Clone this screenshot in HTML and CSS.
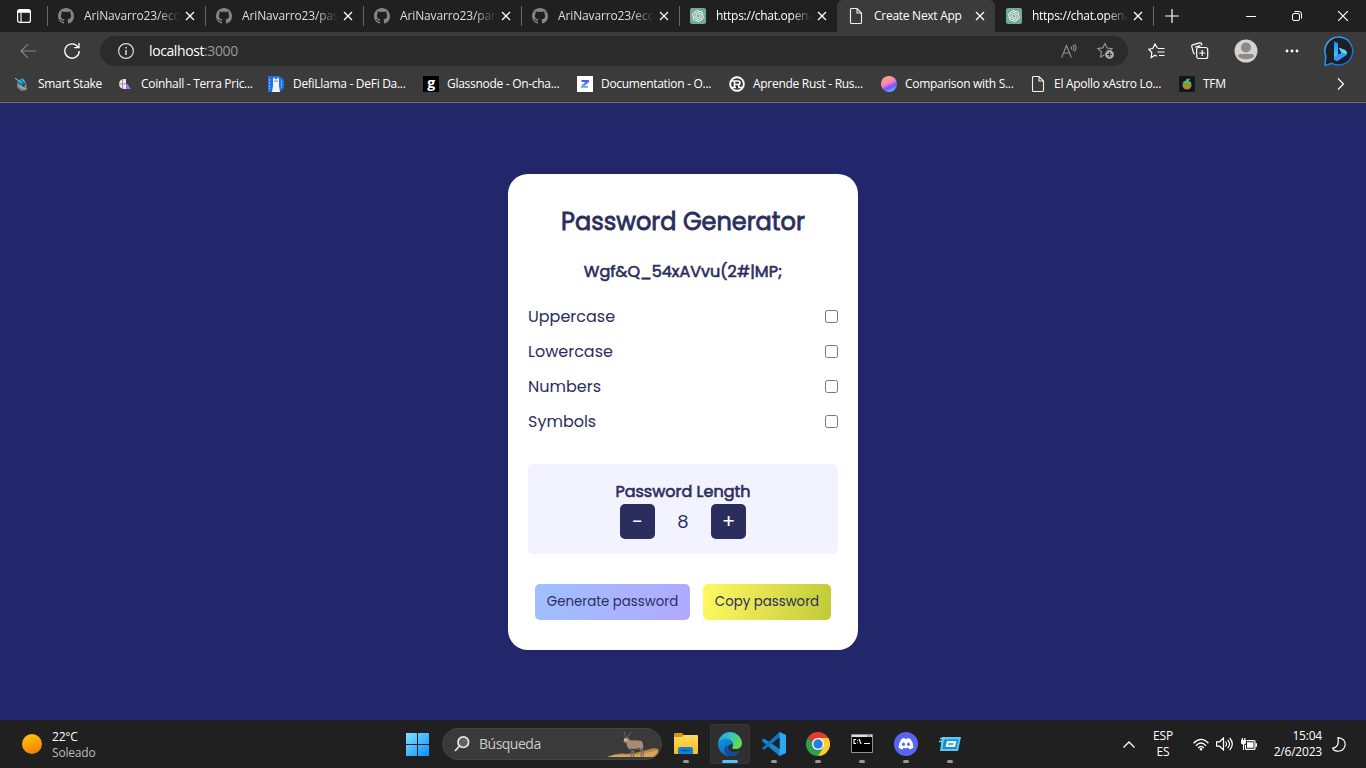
FILE: index.html
```html
<!DOCTYPE html>
<html lang="es">
<head>
<meta charset="utf-8">
<title>Create Next App</title>
<link rel="stylesheet" href="styles.css">
</head>
<body>
<svg class="defs" width="0" height="0">
  <defs>
    <symbol id="github" viewBox="0 0 16 16"><path fill="#858585" d="M8 0C3.58 0 0 3.58 0 8c0 3.54 2.29 6.53 5.47 7.59.4.07.55-.17.55-.38 0-.19-.01-.82-.01-1.49-2.01.37-2.53-.49-2.69-.94-.09-.23-.48-.94-.82-1.13-.28-.15-.68-.52-.01-.53.63-.01 1.08.58 1.23.82.72 1.21 1.87.87 2.33.66.07-.52.28-.87.51-1.07-1.78-.2-3.64-.89-3.64-3.95 0-.87.31-1.59.82-2.15-.08-.2-.36-1.02.08-2.12 0 0 .67-.21 2.2.82.64-.18 1.32-.27 2-.27s1.36.09 2 .27c1.53-1.04 2.2-.82 2.2-.82.44 1.1.16 1.92.08 2.12.51.56.82 1.27.82 2.15 0 3.07-1.87 3.75-3.65 3.95.29.25.54.73.54 1.48 0 1.07-.01 1.93-.01 2.2 0 .21.15.46.55.38A8.01 8.01 0 0 0 16 8c0-4.42-3.58-8-8-8z"/></symbol>
    <symbol id="close" viewBox="0 0 10 10"><path d="M1 1l8 8M9 1L1 9" stroke="#fff" stroke-width="1.3"/></symbol>
    <symbol id="openai" viewBox="0 0 16 16"><rect width="16" height="16" rx="2" fill="#74a99b"/><g transform="translate(2.2 2.2) scale(.483)"><path fill="#fff" d="M22.280 9.820a5.980 5.980 0 0 0-.52-4.910 6.050 6.050 0 0 0-6.510-2.900A6.070 6.070 0 0 0 4.980 4.180a5.980 5.980 0 0 0-4 2.900 6.050 6.050 0 0 0 .74 7.100 5.980 5.980 0 0 0 .51 4.910 6.050 6.050 0 0 0 6.510 2.900A5.980 5.980 0 0 0 13.260 24a6.060 6.060 0 0 0 5.770-4.210 5.990 5.990 0 0 0 4-2.900 6.060 6.060 0 0 0-.75-7.070zM13.260 22.430a4.480 4.480 0 0 1-2.880-1.040l4.920-2.840a.8.8 0 0 0 .39-.68v-6.740l2.020 1.170v5.620a4.500 4.500 0 0 1-4.450 4.510zM3.600 18.300a4.470 4.470 0 0 1-.53-3.010l4.920 2.840a.77.77 0 0 0 .78 0l5.840-3.370v2.330L9.740 19.950A4.500 4.500 0 0 1 3.600 18.300zM2.340 7.900a4.480 4.480 0 0 1 2.370-1.970v5.680a.77.77 0 0 0 .39.68l5.810 3.350-2.020 1.170-4.830-2.790A4.500 4.500 0 0 1 2.340 7.900zM18.940 11.750L13.100 8.360l2.020-1.160 4.830 2.790a4.490 4.490 0 0 1-.68 8.100v-5.680a.79.79 0 0 0-.33-.66zM20.950 8.720L16.200 5.940a.78.78 0 0 0-.79 0L9.570 9.310V6.980l4.860-2.870a4.500 4.500 0 0 1 6.520 4.610zM8.310 12.860l-2.020-1.160V6.070a4.500 4.500 0 0 1 7.380-3.450L8.900 5.460a.8.800 0 0 0-.39.68zM9.400 10.500l2.600-1.500 2.610 1.500v3L12 15l-2.610-1.500z" fill-rule="evenodd"/></g></symbol>
    <symbol id="page" viewBox="0 0 16 16"><path d="M2.5 1.5Q2.5.5 3.5.5H9L13.5 5v9.500q0 1-1 1h-9q-1 0-1-1zM9 .5V5h4.500" fill="none" stroke="#f0f0f0" stroke-width="1.1"/></symbol>
  </defs>
</svg>
<div class="screen">
  <header class="tabs">
    <div class="workspace"><svg width="14" height="14" viewBox="0 0 14 14"><rect x=".6" y=".6" width="12.800" height="12.800" rx="2" fill="none" stroke="#fff" stroke-width="1.200"/><path d="M4 4v9" stroke="#fff" stroke-width="1.100"/><path d="M1 1h12v2.800H1z" fill="#fff"/></svg></div>
    <div class="tab"><svg class="fav"><use href="#github"/></svg><span class="tab-name repo fade">AriNavarro23/eco</span><svg class="x"><use href="#close"/></svg></div>
    <div class="tab"><svg class="fav"><use href="#github"/></svg><span class="tab-name repo fade">AriNavarro23/pas</span><svg class="x"><use href="#close"/></svg></div>
    <div class="tab"><svg class="fav"><use href="#github"/></svg><span class="tab-name repo fade">AriNavarro23/par</span><svg class="x"><use href="#close"/></svg></div>
    <div class="tab"><svg class="fav"><use href="#github"/></svg><span class="tab-name repo fade">AriNavarro23/eco</span><svg class="x"><use href="#close"/></svg></div>
    <div class="tab"><svg class="fav"><use href="#openai"/></svg><span class="tab-name fade">https://chat.opena</span><svg class="x"><use href="#close"/></svg></div>
    <div class="tab active"><svg class="fav"><use href="#page"/></svg><span class="tab-name">Create Next App</span><svg class="x"><use href="#close"/></svg></div>
    <div class="tab last"><svg class="fav"><use href="#openai"/></svg><span class="tab-name fade">https://chat.opena</span><svg class="x"><use href="#close"/></svg></div>
    <div class="new-tab"><svg width="14" height="14"><path d="M7 0v14M0 7h14" stroke="#fff" stroke-width="1.200"/></svg></div>
    <div class="window-buttons">
      <svg width="10" height="10"><path d="M0 5.500h10" stroke="#fff"/></svg>
      <svg width="10" height="10" viewBox="0 0 10 10" fill="none" stroke="#fff"><rect x=".5" y="2.500" width="7" height="7" rx="1.500"/><path d="M2.500.5H7Q9.500.5 9.500 3v4.500"/></svg>
      <svg width="10" height="10"><path d="M0 0l10 10M10 0L0 10" stroke="#fff" stroke-width="1.200"/></svg>
    </div>
  </header>

  <div class="toolbar">
    <svg class="back" width="16" height="14" viewBox="0 0 16 14" fill="none" stroke="#858585" stroke-width="1.100"><path d="M16 7H1M8 0L1 7l7 7"/></svg>
    <svg class="reload" width="16" height="16" viewBox="0 0 16 16" fill="none" stroke="#fff" stroke-width="1.300"><path d="M14.300 4.500A7.200 7.200 0 1 0 15.200 8M15 0v4.700h-4.700"/></svg>
    <div class="address">
      <svg width="16" height="16" viewBox="0 0 16 16" fill="none" stroke="#d8d8d8" stroke-width="1.200"><circle cx="8" cy="8" r="7.400"/><path d="M8 7v5M8 4v1.500" stroke-width="1.500"/></svg>
      <span class="host">localhost<span class="port">:3000</span></span>
      <svg class="read" width="16" height="14" viewBox="0 0 16 14" fill="none" stroke="#929292" stroke-width="1.100"><path d="M.7 13.500L5.500 1.500l4.800 12M2.500 9h6M10 2.500q1.200 1.300 0 3M11.700 1.200q2.400 2.600 0 5.300M13.400 0q3.400 4 0 7.500"/></svg>
      <svg width="18" height="18" viewBox="0 0 18 18"><path d="M8 1.500l2.100 4.600 5 .6-3.700 3.500 1 4.600L8 12.500l-4.400 2.400.9-5L.8 6.500l5-.6z" fill="none" stroke="#999" stroke-width="1.100"/><circle cx="12.500" cy="12.500" r="5" fill="#2b2b2b"/><circle cx="12.500" cy="12.500" r="4.400" fill="#aaa"/><path d="M12.500 10v5M10 12.500h5" stroke="#2b2b2b" stroke-width="1.200"/></svg>
    </div>
    <svg class="favorites" width="17" height="16" viewBox="0 0 17 16" fill="none" stroke="#fff" stroke-width="1.200"><path d="M9.500 5.200L7 1 4.800 5.500l-4 .7 3 3.300-.6 5L7 12.200l2 1M10 5.500h6.500M9.500 9h7M11 12.500h5.500"/></svg>
    <svg class="collections" width="18" height="18" viewBox="0 0 18 18" fill="none" stroke="#fff" stroke-width="1.200"><path d="M4 12q-1.200-.2-1.600-1.400L.8 4.700Q.4 3.300 1.800 2.900L8.500.9q1.500-.4 2 .9l.5 1.400M4.200 5.200L9.500 3.700"/><rect x="5.700" y="5.500" width="11" height="11" rx="2"/><path d="M11.200 8v6M8.200 11h6"/></svg>
    <svg class="avatar" width="24" height="24" viewBox="0 0 24 24"><circle cx="12" cy="12" r="11.500" fill="#d5d2d0"/><circle cx="12" cy="8.500" r="5" fill="#8d8987"/><path d="M4 17.500q0-2.500 2.500-2.500h11q2.500 0 2.500 2.500a10 7 0 0 1-16 0z" fill="#8d8987"/></svg>
    <svg class="more" width="14" height="4"><g fill="#fff"><circle cx="2" cy="2" r="1.400"/><circle cx="7" cy="2" r="1.400"/><circle cx="12" cy="2" r="1.400"/></g></svg>
    <svg class="bing" width="30" height="31" viewBox="0 0 30 31"><defs><linearGradient id="bg" x1="0" y1="0" x2="1" y2="1"><stop stop-color="#35b8f0"/><stop offset="1" stop-color="#1658dc"/></linearGradient><linearGradient id="bb" x2="0" y2="1"><stop stop-color="#1490f5"/><stop offset="1" stop-color="#4cdafa"/></linearGradient></defs><path d="M15 1a14 14 0 1 1-7 26.300L1 29.500 1.800 20A14 14 0 0 1 15 1z" fill="#1d1f24" stroke="url(#bg)" stroke-width="1.500"/><path d="M10 5.500l4 1.500v14.500L10 24z" fill="url(#bb)"/><path d="M10 20.500l7.500-3.500-2.800-5L21 14q3 2 1.500 5L14 24.700q-3.500 1.200-4-4.200z" fill="#2b9efb"/><path d="M14.700 11.500L21 14q2.300 1.500 2 4l-5.500-1.500z" fill="#54dcff"/></svg>
  </div>

  <nav class="bookmarks">
    <div class="bm b1"><svg class="fav" viewBox="0 0 16 16"><path d="M4 4l5-2 3 5-5 3z" fill="#1a78b4"/><path d="M3 6l7 5 2-5 1 8-6 1-4-4z" fill="#7b8788"/><path d="M1 2l5 4M5 10l6 3M8 3l3 3" stroke="#aac2c9"/><path d="M4 5l4 1" stroke="#20baff" stroke-width="2"/></svg><span>Smart Stake</span></div>
    <div class="bm b2"><svg class="fav" viewBox="0 0 16 16"><path d="M2 8a5 5 0 0 1 5-5h2v10H7a5 5 0 0 1-5-5z" fill="#eee4f5"/><path d="M9 8h1.500l3.500 5H9z" fill="#a36fe5"/><path d="M2 8h7M5.500 3v10" stroke="#777" stroke-width=".7"/></svg><span>Coinhall - Terra Pric...</span></div>
    <div class="bm b3"><svg class="fav" viewBox="0 0 16 16"><path d="M0 0h9a7.500 8 0 0 1 0 16H0z" fill="#2172e5"/><path d="M4 16l1-6V3l1-2 1 2h2l1-2 1 2v7l1 6z" fill="#eef6ff"/><path d="M1.500 3v10M13.500 4.500v7" stroke="#8dc6ff" stroke-dasharray="2 1"/><circle cx="7" cy="5" r=".6"/><circle cx="9" cy="5" r=".6"/></svg><span>DefiLlama - DeFi Da...</span></div>
    <div class="bm b4"><span class="fav glass">g</span><span>Glassnode - On-cha...</span></div>
    <div class="bm b5"><svg class="fav" viewBox="0 0 16 16"><defs><linearGradient id="zg" x2="0" y2="1"><stop stop-color="#5548e8"/><stop offset="1" stop-color="#65cefa"/></linearGradient></defs><path fill="#fff" d="M0 0h16v16H0z"/><path d="M4.500 4H12v2l-4.200 4H11v2H4v-2l4-4H4.500z" fill="url(#zg)"/></svg><span>Documentation - O...</span></div>
    <div class="bm b6"><svg class="fav" viewBox="0 0 16 16"><circle cx="8" cy="8" r="6.700" fill="#333" stroke="#fff" stroke-width="1.700"/><circle cx="8" cy="8" r="7.500" fill="none" stroke="#fff" stroke-dasharray="1 .8"/><path d="M2 5h7q2 0 2 1.700T9 8.500H5M5.500 5v6.500M2 11.500h5M8.500 8.500q1.500 0 1.500 3h4" fill="none" stroke="#fff" stroke-width="1.700"/></svg><span>Aprende Rust - Rus...</span></div>
    <div class="bm b7"><span class="fav ball"></span><span>Comparison with S...</span></div>
    <div class="bm b8"><svg class="fav"><use href="#page"/></svg><span>El Apollo xAstro Lo...</span></div>
    <div class="bm b9"><svg class="fav" viewBox="0 0 16 16"><rect width="16" height="16" rx="2" fill="#161423"/><ellipse cx="8" cy="9.500" rx="4.500" ry="4" fill="#a18c34"/><path d="M3.500 8q.5-3 3-3l1-2 4-.5-2 2.500q3 .5 3 3l-3-1-1 1-2-1z" fill="#46c36a"/></svg><span>TFM</span></div>
    <svg class="overflow" width="8" height="12" fill="none" stroke="#fff" stroke-width="1.200"><path d="M1 .5L6.500 6 1 11.500"/></svg>
  </nav>

  <main class="page">
    <section class="card">
      <h1>Password Generator</h1>
      <p class="password">Wgf&amp;Q_54xAVvu(2#|MP;</p>
      <div class="options">
        <label class="option"><span>Uppercase</span><input type="checkbox"></label>
        <label class="option"><span>Lowercase</span><input type="checkbox"></label>
        <label class="option"><span>Numbers</span><input type="checkbox"></label>
        <label class="option"><span>Symbols</span><input type="checkbox"></label>
      </div>
      <div class="length">
        <h2>Password Length</h2>
        <div class="stepper"><button class="step">-</button><span class="count">8</span><button class="step">+</button></div>
      </div>
      <div class="actions"><button class="action generate">Generate password</button><button class="action copy">Copy password</button></div>
    </section>
  </main>

  <footer class="taskbar">
    <div class="weather"><span class="sun"></span><div><div>22°C</div><div class="dim">Soleado</div></div></div>
    <div class="apps">
      <svg class="start" width="24" height="24" viewBox="0 0 24 24"><defs><linearGradient id="wg" gradientUnits="userSpaceOnUse" x1="0" y1="0" x2="24" y2="24"><stop stop-color="#86e1ff"/><stop offset="1" stop-color="#078ffd"/></linearGradient></defs><path fill="url(#wg)" d="M0 1h11v11H0zM12 1h11v11H12zM0 13h11v11H0zM12 13h11v11H12z"/></svg>
      <div class="search">
        <svg width="16" height="16" viewBox="0 0 16 16" fill="none" stroke="#e8e8e8" stroke-width="1.700"><circle cx="9.300" cy="6.200" r="5.300" fill="#626262"/><path d="M5.500 10L1 15"/></svg><span>Búsqueda</span>
        <svg class="oryx" width="52" height="29" viewBox="0 0 52 29"><path d="M0 27q8-4 16-3.500 9 1 20-2.500l9-2.500q6-1 6.500 2 0 4-5 6.500z" fill="#b9873e"/><path d="M0 27q10-3 18-2 12 1 33-5-1 4-5 7z" fill="#d5a65a"/><path d="M18.500 8L17 1M20 7.500L24.500 1.500" stroke="#6b6266" stroke-width="1" fill="none"/><path d="M16.500 11l1-3 3-.5 3 3q6-.5 11 .5 2.500 1.500 2 7l-3 1.500q-6 0-8-.5l-3 1-2.500-4-1-4-2 1z" fill="#a88b77"/><path d="M24 18.500l1 3-1 5.500M26.500 19v8M33 18.500l1.500 3-.5 5.500M35 17.500l1.200 4v5" stroke="#7c6c70" stroke-width="1.300" fill="none"/><path d="M23 19.500q6 0 10-.8" stroke="#3d3536" fill="none"/><path d="M36 12l1.800 7" stroke="#3d3536" stroke-width="1.200"/><path d="M17 9.500l3 1" stroke="#eee"/></svg>
      </div>
      <div class="app"><svg width="24" height="24" viewBox="0 0 24 24"><defs><linearGradient id="fg" x2="0" y2="1"><stop stop-color="#ffdc5c"/><stop offset="1" stop-color="#fdbb22"/></linearGradient></defs><path d="M0 2q0-1 1-1h7l2 2h9v4H0z" fill="#d99608"/><path d="M0 5h8l2-2h13q1 0 1 1v17q0 1-1 1H1q-1 0-1-1z" fill="url(#fg)"/><path d="M4 22v-5q0-2 2-2h11q2 0 2 2v5z" fill="#1681cf"/><path d="M7 18.500h9" stroke="#0759a0" stroke-width="1.500"/></svg></div>
      <div class="app current"><svg width="24" height="24" viewBox="0 0 24 24"><defs><linearGradient id="eg" x1="0" y1="0" x2="1" y2=".4"><stop stop-color="#249cdc"/><stop offset=".5" stop-color="#34c1ca"/><stop offset="1" stop-color="#65dc4a"/></linearGradient><linearGradient id="eb" x1="0" y1="0" x2=".8" y2="1"><stop stop-color="#1598e3"/><stop offset="1" stop-color="#075ab2"/></linearGradient></defs><path d="M.1 11A12 12 0 0 1 24 11c0 4-3 6-6.500 6-3 0-4-1-3-2 2-4-1-7-5-7-4 0-8 1-9.400 3z" fill="url(#eg)"/><path d="M0 12c0-3 4-5.500 8-5.500 4 0 7 3 7 6-3-1-5 1-5 3.500 0 4 7 6 12 3A12 12 0 0 1 0 12z" fill="url(#eb)"/><path d="M10 13c-3 5 3 9 12 6q-3 5-9.500 5C6 24 4 15 10 13z" fill="#124b99"/></svg></div>
      <div class="app"><svg width="24" height="24" viewBox="0 0 24 24"><path d="M0 8l2-1.500L23 20l-5.500 4L0 9z" fill="#1685d0"/><path d="M0 16l17.500-16 4 2L2 18z" fill="#0f74c0"/><path d="M17.500 0L24 3v18l-6.500 3z" fill="#2ba9f2"/><path d="M17.500 7v10L11 12z" fill="#222"/></svg></div>
      <div class="app"><svg width="24" height="24" viewBox="0 0 24 24"><path d="M12 12L1.600 6A12 12 0 0 1 22.400 6z" fill="#e53a2e"/><path d="M12 12L1.600 6A12 12 0 0 0 12 24l5.200-9z" fill="#2ca04c"/><path d="M12 12l5.200 3L12 24A12 12 0 0 0 22.400 6H12z" fill="#fccc30"/><circle cx="12" cy="12" r="6" fill="#fff"/><circle cx="12" cy="12" r="4.700" fill="#287ae8"/></svg></div>
      <div class="app"><svg width="24" height="24" viewBox="0 0 24 24"><path d="M1.500 2.500h21v18h-21z" fill="#000" stroke="#929292"/><path d="M2 3h20v2H2z" fill="#ddd"/><path d="M18 3v2M20 3v2" stroke="#777"/><path d="M6 7.500H4v4h2M7.500 8v.8M7.500 10.500v.8M9 7l2 5M14 11.500h6" stroke="#fff" stroke-width="1.200" fill="none"/></svg></div>
      <div class="app"><svg width="24" height="24" viewBox="0 0 24 24"><circle cx="12" cy="12" r="12" fill="#5865f2"/><path d="M7.500 7q2-1 3-1l.5 1h2l.5-1q1 0 3 1 3 4 3 8.500-2 1.700-4 2l-1-1.700q-2.500.7-5 0l-1 1.700q-2-.3-4-2Q4.500 11 7.500 7z" fill="#fff"/><ellipse cx="9.500" cy="12.300" rx="1.500" ry="1.700" fill="#5865f2"/><ellipse cx="14.500" cy="12.300" rx="1.500" ry="1.700" fill="#5865f2"/></svg></div>
      <div class="app"><svg width="24" height="24" viewBox="0 0 24 24"><path d="M4 5h19l-3 14H2z" fill="#59c8f4"/><path d="M6 7.500h14.500l-2 9.500H4.500z" fill="#208cc5"/><path d="M9 9h9.500L17 15H7.500z" fill="#e9fbff"/><path d="M10.500 11h5l-.5 2h-5z" fill="#38b4e7"/><path d="M2 6.500h5M1 9.500h4" stroke="#6bd5fa" stroke-width="1.500"/></svg></div>
    </div>
    <div class="tray">
      <svg class="chevron" width="12" height="7" fill="none" stroke="#fff" stroke-width="1.300"><path d="M.5 6.500L6 1l5.500 5.500"/></svg>
      <div class="lang"><div>ESP</div><div>ES</div></div>
      <svg class="wifi" width="16" height="13" viewBox="0 0 16 13" fill="none" stroke="#fff" stroke-width="1.300"><path d="M.6 5.200q7.400-7.800 14.800 0M3 7.700q5-5.400 10 0M5.200 10q2.800-3 5.600 0"/><circle cx="8" cy="11.300" r="1.200" fill="#fff" stroke="none"/></svg>
      <svg class="sound" width="17" height="14" viewBox="0 0 17 14" fill="none" stroke="#fff" stroke-width="1.200"><path d="M.6 4.800h3L7.500 1v12l-3.900-3.800h-3zM9.500 4.500q2 2.500 0 5M11.700 2.800q3.600 4.200 0 8.400M13.700 1q5.200 6 0 12"/></svg>
      <svg class="battery" width="16" height="13" viewBox="0 0 16 13"><path d="M5.500 2.600h7.500q1 0 1 1v6.800q0 1-1 1H5.500q-1 0-1-1V7" fill="none" stroke="#fff" stroke-width="1.200"/><path d="M6 4.200h6.500v5.600H6zM14.500 5.200H16v3.600h-1.500zM0 2h5v3Q4 6.500 3 6.500V12H2V6.500Q0 6 0 5zM.7 0h1.200v3H.7zM3.200 0h1.200v3H3.200z" fill="#fff"/></svg>
      <div class="clock"><div>15:04</div><div>2/6/2023</div></div>
      <svg class="moon" width="14" height="15" viewBox="0 0 14 15"><path d="M6 .7q8 1 7 8-1.500 6-7.500 5.500Q2 14 .7 11.200 7.500 10.500 6 .7z" fill="none" stroke="#fff" stroke-width="1.200"/></svg>
    </div>
  </footer>
</div>
</body>
</html>
```
FILE: styles.css
```css
* { box-sizing: border-box; }
body { margin: 0; overflow: hidden; font-family: "Segoe UI", "Open Sans", sans-serif; font-size: 12px; color: #fff; }
svg { flex: none; display: block; }
.defs { position: absolute; }
.screen { width: 1366px; height: 768px; display: flex; flex-direction: column; }

.tabs { height: 32px; background: #202020; display: flex; }
.workspace { width: 47px; padding: 9px 0 0 17px; }
.tab { width: 158px; height: 32px; padding-left: 11px; display: flex; align-items: center; background: linear-gradient(#666, #666) 0 6px / 1px 20px no-repeat; }
.fav { width: 16px; height: 16px; flex: none; }
.tab-name { width: 96px; margin-left: 10px; white-space: nowrap; line-height: 20px; letter-spacing: -.27px; }
.fade { -webkit-mask-image: linear-gradient(90deg, #000 74px, transparent 96px); mask-image: linear-gradient(90deg, #000 74px, transparent 96px); }
.repo { color: #ddd; letter-spacing: -.13px; }
.x { width: 10px; height: 10px; margin-left: 5px; }
.active { background: #3b3b3b; border-radius: 6px 6px 0 0; }
.last { width: 159px; background: linear-gradient(#666, #666) 158px 6px / 1px 20px no-repeat; }
.new-tab { padding: 9px 0 0 11px; }
.window-buttons { margin-left: auto; padding: 11px 18px 0 0; display: flex; gap: 36px; }

.toolbar { height: 39px; padding-bottom: 1px; background: #3b3b3b; display: flex; align-items: center; }
.back { margin-left: 20px; }
.reload { margin-left: 28px; }
.address { width: 1028px; height: 30px; margin-left: 20px; padding: 0 13px 0 18px; border-radius: 15px; background: #2b2b2b; display: flex; align-items: center; }
.host { margin-left: 15px; font-size: 14px; line-height: 20px; letter-spacing: -.4px; }
.port { color: #999; }
.read { margin: 0 20px 0 auto; }
.favorites { margin-left: 20px; }
.collections { margin-left: 26px; }
.avatar { margin-left: 25px; }
.more { margin-left: 27px; }
.bing { margin-left: 25px; }

.bookmarks { height: 32px; padding: 0 21px 6px 14px; background: #3b3b3b; border-bottom: 1px solid #6b6b6b; display: flex; align-items: center; }
.bm { display: flex; gap: 8px; align-items: center; white-space: nowrap; letter-spacing: -.29px; line-height: 20px; }
.b1 { width: 103px; } .b2 { width: 151px; } .b3 { width: 155px; gap: 9px; }
.b4 { width: 154px; } .b5 { width: 152px; } .b6 { width: 152px; }
.b7, .b8 { width: 149px; }
.overflow { margin-left: auto; }
.glass { background: #000; font: 700 14px/13px "Open Sans", sans-serif; text-align: center; }
.ball { border-radius: 50%; background: linear-gradient(155deg, #ffac76 5%, #f982be 45%, #6b55ff 65%, #78cdf4 95%); }

.page { flex: 1; padding-top: 71px; background: #22266b; display: flex; justify-content: center; align-items: flex-start; font-family: Poppins, Inter, sans-serif; color: #2b2e5d; }
.card { width: 350px; height: 476px; padding: 30px 20px; border-radius: 20px; background: #fff; }
h1, h2, p { margin: 0; text-align: center; white-space: nowrap; font-weight: 400; }
h1 { font-size: 24px; line-height: 36px; -webkit-text-stroke: .8px #2b2e5d; }
.password { margin-top: 20px; font-size: 16px; line-height: 24px; -webkit-text-stroke: .6px #2b2e5d; }
.options { margin-top: 15px; }
.option { height: 35px; display: flex; align-items: center; justify-content: space-between; font-size: 16px; }
.option input { width: 13px; height: 13px; margin: 0; }
.length { height: 90px; margin-top: 25px; padding-top: 15px; border-radius: 5px; background: #f3f3ff; }
h2 { font-size: 16px; line-height: 25px; -webkit-text-stroke: .6px #2b2e5d; }
.stepper { display: flex; justify-content: center; align-items: center; }
.step { width: 35px; height: 35px; padding: 0 0 2px; border: 0; border-radius: 5px; background: #2b2e5d; color: #fff; font: 400 20px Poppins, sans-serif; }
.count { width: 56px; text-align: center; font-size: 18px; }
.actions { margin-top: 30px; display: flex; justify-content: center; gap: 13px; }
.action { height: 36px; padding: 0; border: 0; border-radius: 5px; color: #2b2e5d; font-family: inherit; font-size: 13.33px; }
.generate { width: 155px; background: linear-gradient(100deg, #a0c0ff, #b1a9ff); }
.copy { width: 128px; background: linear-gradient(100deg, #fff963, #c2ca38); }

.taskbar { height: 48px; background: #202020; display: grid; grid-template-columns: 406px 570px 1fr; letter-spacing: -.2px; line-height: 16px; }
.weather { padding: 9px 0 0 22px; display: flex; gap: 10px; }
.sun { width: 20px; height: 20px; margin-top: 5px; border-radius: 50%; background: linear-gradient(160deg, #ffcd0a, #f27404); }
.dim { color: #bbb; }
.apps { display: flex; align-items: center; }
.search { width: 220px; height: 32px; margin: 0 4px 0 12px; padding: 0 2px 0 11px; border: 1px solid #454545; border-radius: 16px; background: #3a3a3a; display: flex; align-items: center; color: #ccc; font-size: 14px; letter-spacing: -.5px; }
.search span { margin-left: 9px; }
.oryx { margin-left: auto; }
.app { width: 40px; height: 40px; margin-right: 4px; padding-top: 8px; border-radius: 4px; display: flex; flex-direction: column; align-items: center; gap: 4px; }
.app::after { content: ""; width: 6px; height: 3px; border-radius: 2px; background: #999; }
.current { background: #2f2f2f; outline: 1px solid #383838; outline-offset: -1px; }
.current::after { width: 16px; background: #4cc2ff; }
.tray { display: flex; align-items: center; }
.chevron { margin-left: 147px; }
.lang { width: 30px; margin: 0 0 0 13px; text-align: center; }
.wifi { margin-left: 15px; }
.sound { margin-left: 7px; }
.battery { margin-left: 8px; }
.clock { width: 60px; margin-left: 5px; text-align: right; }
.moon { margin-left: 10px; }
```
